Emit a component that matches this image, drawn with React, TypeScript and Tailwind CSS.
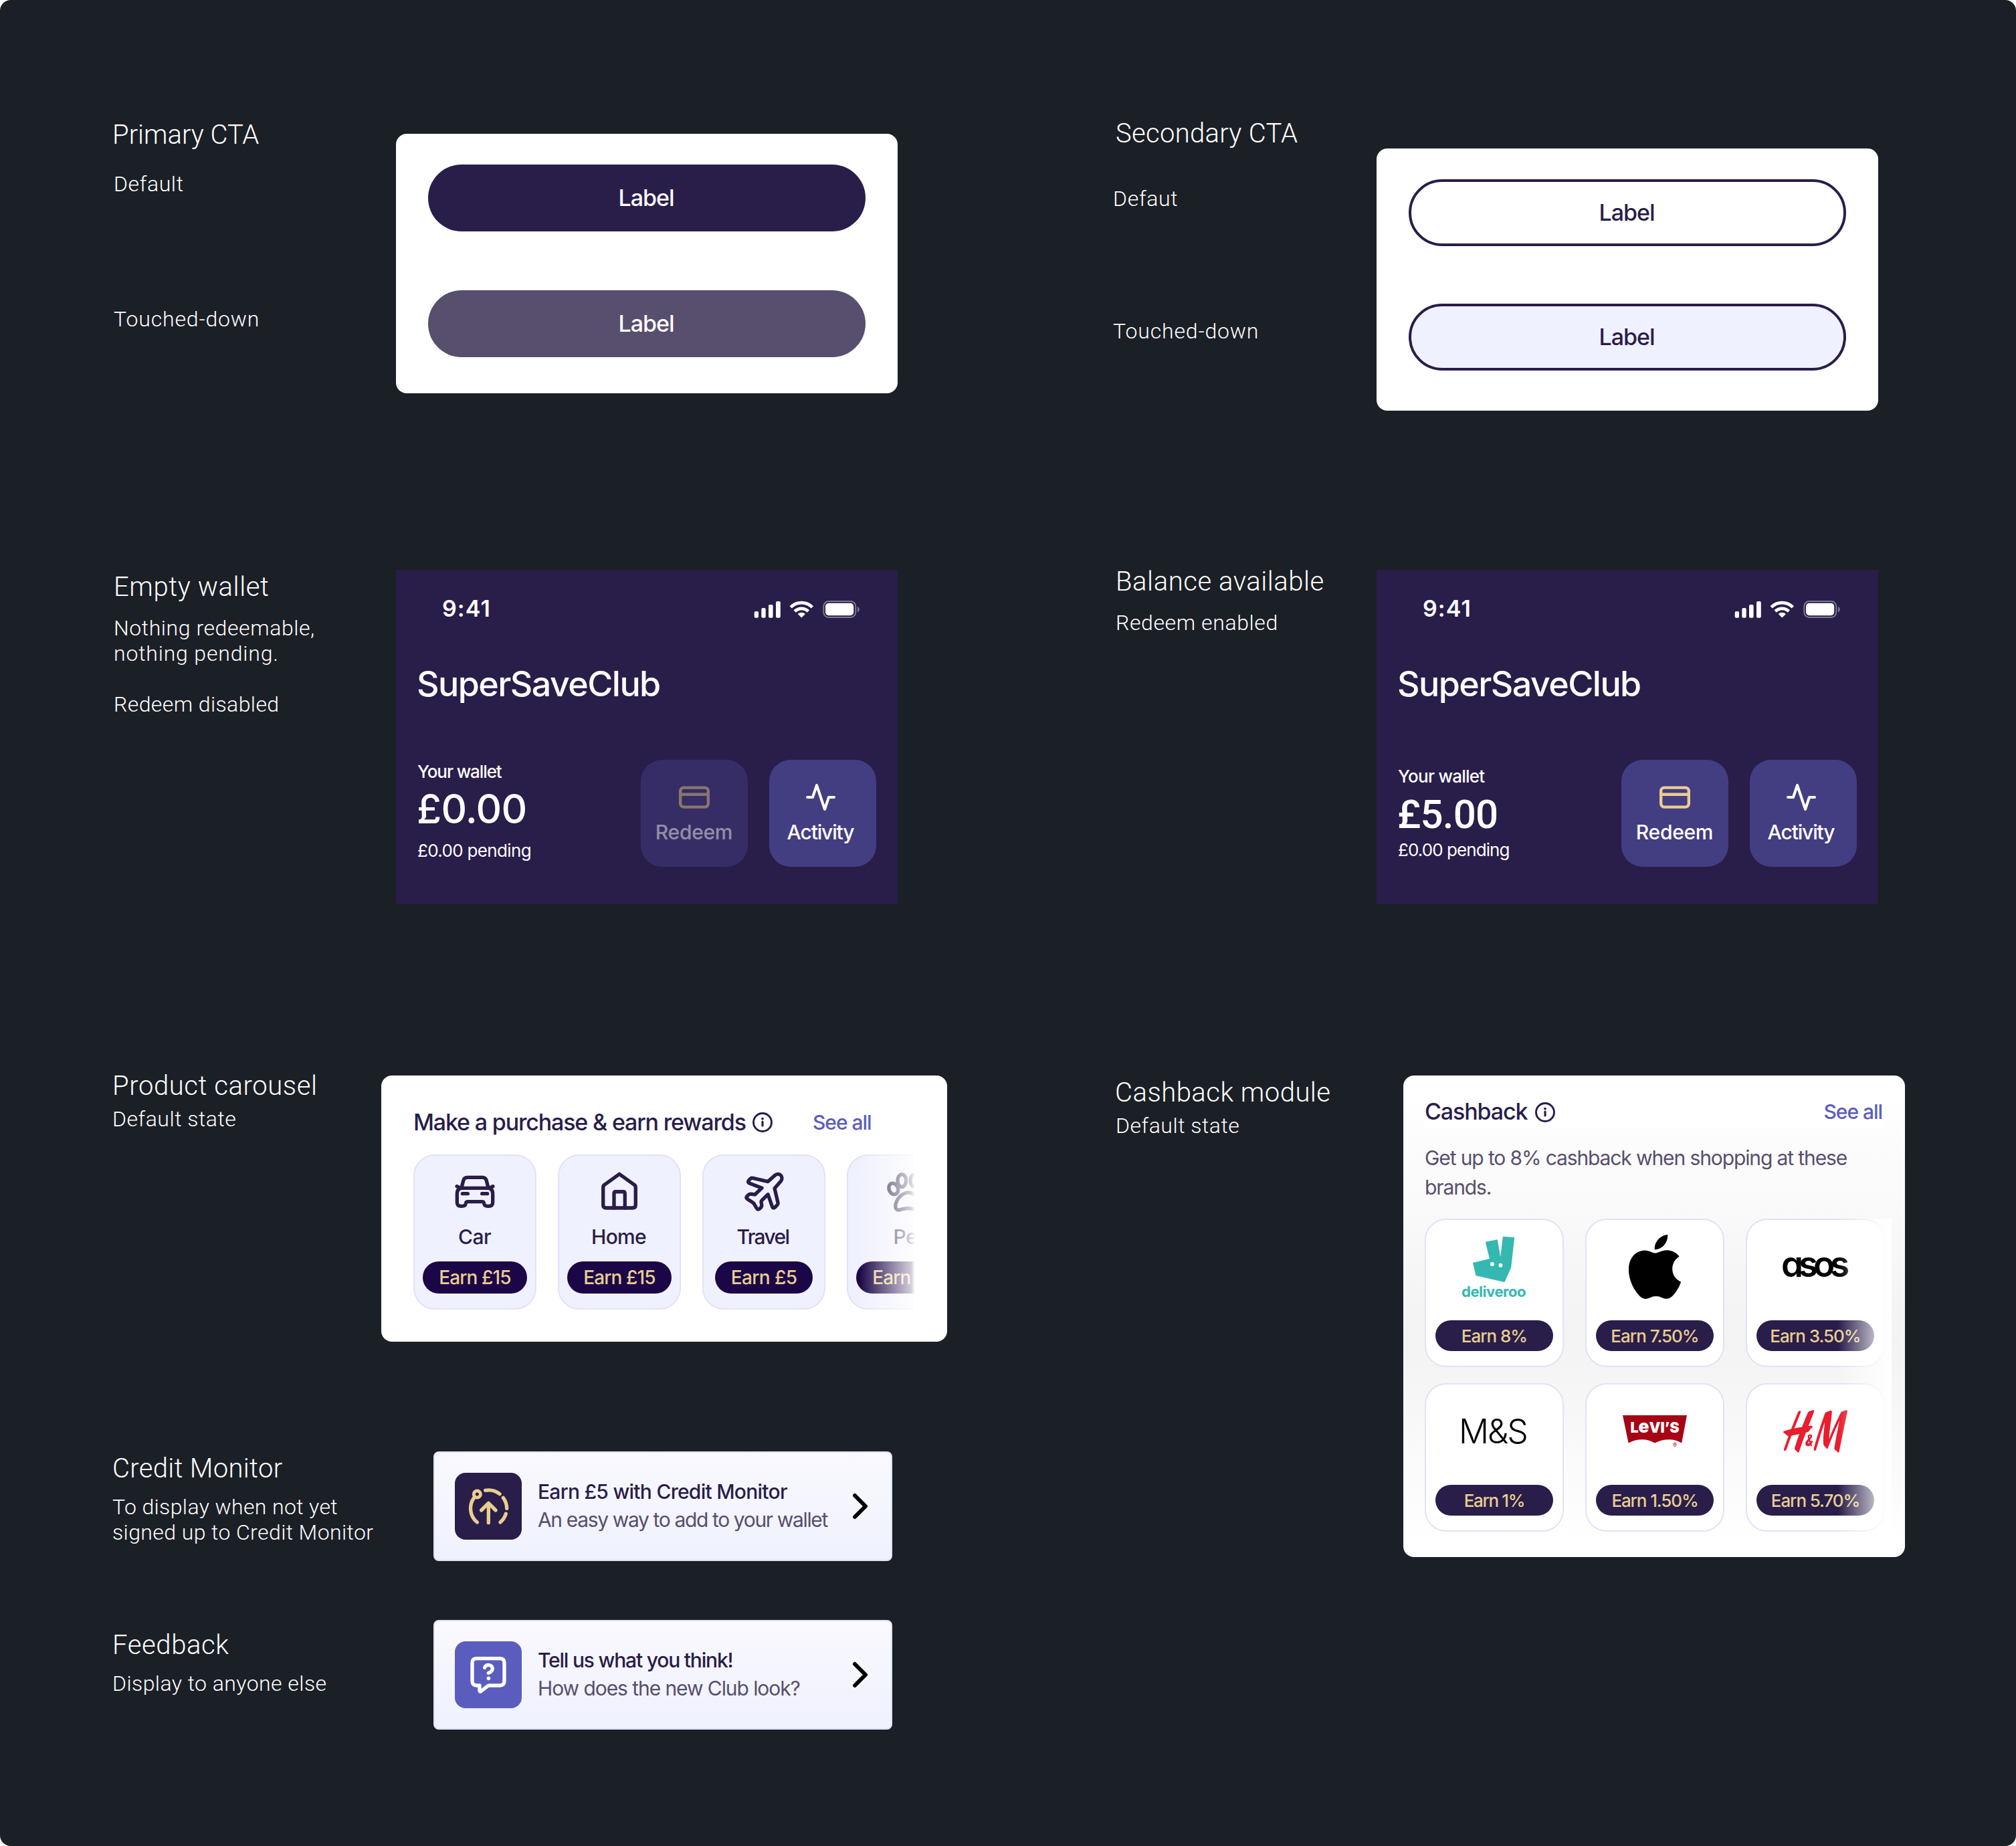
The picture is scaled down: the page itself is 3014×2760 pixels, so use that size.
import type { ReactNode } from "react";
import { SiApple, SiHandm } from "react-icons/si";

/* ---------- Annotation text ---------- */

function Heading({ children, className = "" }: { children: ReactNode; className?: string }) {
  return (
    <h2 className={`h-[48px] pt-[2px] text-[40px] leading-[48px] font-light whitespace-nowrap text-white ${className}`}>{children}</h2>
  );
}

function Note({ children, className = "" }: { children: ReactNode; className?: string }) {
  return (
    <p className={`text-[32px] leading-[38px] font-light whitespace-nowrap text-white ${className}`}>{children}</p>
  );
}

/* ---------- Buttons ---------- */

function Cta({ className }: { className: string }) {
  return (
    <button
      className={`flex h-[100px] w-[654px] items-center justify-center rounded-full pr-[2px] pb-[2px] text-[34px] font-medium tracking-[-1px] ${className}`}
    >
      Label
    </button>
  );
}

/* ---------- Wallet header ---------- */

function StatusIcons() {
  return (
    <svg width="158" height="26" viewBox="0 0 158 26" fill="#fff">
      <rect x="0.7" y="16" width="6.3" height="9.7" rx="2" />
      <rect x="11.3" y="11" width="6.4" height="14.7" rx="2" />
      <rect x="22" y="6" width="6.6" height="19.7" rx="2" />
      <rect x="33" y="1" width="6.8" height="24.7" rx="2" />
      <path d="M55.2 9.9a22.7 22.7 0 0 1 32.2 0M61.2 16a14.2 14.2 0 0 1 20.2 0" fill="none" stroke="#fff" strokeWidth="4.7" />
      <path d="M71.3 25.6 65.6 20a8.3 8.3 0 0 1 11.4 0Z" />
      <rect x="104.3" y="1" width="48" height="24" rx="7.5" fill="none" stroke="#fff" strokeOpacity="0.4" strokeWidth="2" />
      <rect x="107" y="3.8" width="42.2" height="18.4" rx="5" />
      <path d="M155 9v8.4c1.8-.7 2.8-2.3 2.8-4.2S156.8 9.700 155 9Z" fillOpacity="0.4" />
    </svg>
  );
}

function CardIcon() {
  return (
    <svg width="48" height="48" viewBox="0 0 48 48" fill="none" stroke="#e9ce91" strokeWidth="4.4" strokeLinecap="round">
      <rect x="3.2" y="9.6" width="41.6" height="29" rx="5" />
      <path d="M4 19.8H44" />
    </svg>
  );
}

function ActivityIcon() {
  return (
    <svg width="48" height="48" viewBox="0 0 24 24" fill="none" stroke="#fff" strokeWidth="2" strokeLinecap="round" strokeLinejoin="round">
      <path d="M22 12h-4l-3 9L9 3l-3 9H2" />
    </svg>
  );
}

function WalletAction({ icon, label, className = "" }: { icon: ReactNode; label: string; className?: string }) {
  return (
    <button className={`flex h-[160px] w-[160px] flex-col items-center rounded-[32px] bg-[#433d82] pt-8 text-white ${className}`}>
      {icon}
      <span className="mt-[10px] text-[30px] leading-[36px] font-medium">{label}</span>
    </button>
  );
}

function WalletCard({ children, redeemDisabled = false }: { children: ReactNode; redeemDisabled?: boolean }) {
  return (
    <div className="flex h-[500px] w-[750px] shrink-0 flex-col bg-[#291d4a] px-8 font-['Inter',sans-serif] text-white">
      <div className="mt-[38px] flex h-[40px] items-center justify-between pr-[25px] pl-[37px]">
        <span className="text-[34px] leading-[40px] font-semibold tracking-[1.1px]">9:41</span>
        <div className="pt-[2px]">
          <StatusIcons />
        </div>
      </div>
      <div className="mt-[61px] -ml-[1px] text-[52px] leading-[64px] font-medium tracking-[-1.57px]">SuperSaveClub</div>
      <div className="mt-[81px] flex h-[160px] justify-between">
        {children}
        <div className="flex gap-8">
          <WalletAction
            icon={<CardIcon />}
            label="Redeem"
            className={redeemDisabled ? "pr-[1px] tracking-[-0.3px] opacity-50" : "pr-[1px] tracking-[-0.3px]"}
          />
          <WalletAction icon={<ActivityIcon />} label="Activity" className="pr-[7px] tracking-[-1.15px]" />
        </div>
      </div>
    </div>
  );
}

/* ---------- Product carousel ---------- */

function InfoIcon() {
  return (
    <svg width="30" height="30" viewBox="0 0 30 30" fill="none" stroke="#291d4a" className="shrink-0">
      <circle cx="15" cy="15" r="13.5" strokeWidth="2.9" />
      <path d="M15 14v6" strokeWidth="3.2" strokeLinecap="round" />
      <circle cx="15" cy="9.6" r="1.9" fill="#291d4a" stroke="none" />
    </svg>
  );
}

function ProductIcon({ children }: { children: ReactNode }) {
  return (
    <svg width="64" height="64" viewBox="0 0 24 24" fill="none" stroke="#291d4a" strokeWidth="2" strokeLinecap="round" strokeLinejoin="round" className="shrink-0">
      {children}
    </svg>
  );
}

const products = [
  {
    name: "Car",
    reward: "Earn £15",
    nameClass: "pr-[1px] tracking-[-0.5px]",
    pillClass: "w-[156px] tracking-[-0.89px]",
    icon: (
      <>
        <path d="M4.5 9.7 5.5 5.8Q5.95 3.9 7.8 3.9H16.2Q18.05 3.9 18.5 5.8L19.5 9.7" />
        <path d="M5 9.9H19Q22 9.9 22 13V17.8Q22 20 19.8 20H19.2Q17.4 20 17.15 18.6 17 17.5 16 17.5H8Q7 17.5 6.85 18.6 6.6 20 4.8 20H4.2Q2 20 2 17.8V13Q2 9.9 5 9.9Z" />
        <path d="M5 13H8M16 13H19M1.9 8.9 3.3 9.6M22.1 8.9 20.7 9.6" />
      </>
    ),
  },
  {
    name: "Home",
    reward: "Earn £15",
    nameClass: "pr-[2px] tracking-[-0.7px]",
    pillClass: "w-[156px] tracking-[-0.89px]",
    icon: (
      <>
        <path d="M12 2 3.8 7.9Q2.9 8.5 2.9 9.5V19.3Q2.9 21 4.6 21H19.4Q21.1 21 21.1 19.3V9.5Q21.1 8.5 20.2 7.9Z" />
        <path d="M9 21V12.9Q9 11.9 10 11.9H14.1Q15.1 11.9 15.1 12.9V21" />
      </>
    ),
  },
  {
    name: "Travel",
    reward: "Earn £5",
    nameClass: "pr-[3px] tracking-[-1.6px]",
    pillClass: "w-[146px] tracking-[-0.61px]",
    icon: (
      <path d="M14.3 6.2 18.2 2.7C19.3 1.7 20.7 1.8 21.5 2.7 22.3 3.6 22.3 4.9 21.6 5.9L18 10 19.9 18.1Q20 18.7 19.6 19.2L18.3 20.6Q17.2 21.5 16.7 20.3L14.3 13.4 10.8 16.8Q10.5 17.1 10.5 17.6L10.8 19.5Q10.8 20.2 10.4 20.7L9.7 21.4Q8.7 22.3 7.9 21.1L6.5 18.7Q6.3 18.3 5.8 18L2.8 16Q1.7 15.3 2.6 14.4L3.4 13.6Q3.9 13.2 4.6 13.2L7 13.5 10.9 9.8 3.8 7.1Q2.7 6.6 3.6 5.5L4.6 4.5Q5.1 4.1 5.8 4.3Z" />
    ),
  },
  {
    name: "Pet",
    reward: "Earn £15",
    nameClass: "tracking-[-0.7px]",
    pillClass: "w-[156px] tracking-[-0.89px]",
    icon: (
      <>
        <ellipse cx="3.7" cy="10.3" rx="2.5" ry="3.2" transform="rotate(-22 3.7 10.3)" />
        <ellipse cx="8.4" cy="5.7" rx="2.4" ry="3.5" />
        <ellipse cx="15.6" cy="5.7" rx="2.4" ry="3.5" />
        <ellipse cx="20.3" cy="10.3" rx="2.5" ry="3.2" transform="rotate(22 20.3 10.3)" />
        <path d="M12 12.3C8.5 12.5 4.8 16.3 4.8 20.2 4.8 21.9 6 22.4 7.2 22.1 8.8 21.7 10.4 21.2 12 21.2S15.2 21.7 16.8 22.1C18 22.4 19.2 21.9 19.2 20.2 19.2 16.3 15.5 12.5 12 12.3Z" />
      </>
    ),
  },
];

function ProductCarousel() {
  return (
    <div className="mt-[10px] h-[398px] w-[846px] shrink-0 rounded-[16px] bg-white px-12 pt-[46px] font-['Inter',sans-serif] text-[#291d4a]">
      <div className="flex h-[48px] items-center">
        <span className="w-[507px] text-[34px] leading-[44px] font-medium tracking-[-1.17px] whitespace-nowrap">
          Make a purchase &amp; earn rewards
        </span>
        <InfoIcon />
        <span className="ml-[60px] text-[30px] leading-[44px] font-medium tracking-[-1.04px] text-[#5b5dbe]">See all</span>
      </div>
      <div className="relative mt-6 flex h-[232px] gap-8 overflow-hidden">
        {products.map((p) => (
          <div
            key={p.name}
            className="flex h-[232px] w-[184px] shrink-0 flex-col items-center rounded-[32px] border-2 border-[#e0e3f6] bg-[#f0f1fe] pt-[22px]"
          >
            <ProductIcon>{p.icon}</ProductIcon>
            <span className={`mt-[15px] text-[30px] leading-[40px] font-medium ${p.nameClass}`}>{p.name}</span>
            <span
              className={`mt-[17px] flex h-[48px] shrink-0 items-center justify-center rounded-full bg-[#1b0647] text-[28px] font-medium whitespace-nowrap text-[#e9ce91] ${p.pillClass}`}
            >
              {p.reward}
            </span>
          </div>
        ))}
        <div className="absolute inset-y-0 right-0 w-[84px] bg-[linear-gradient(to_right,rgba(255,255,255,0)_0%,rgba(255,255,255,0.8)_93%,#fff_100%)]" />
      </div>
    </div>
  );
}

/* ---------- Cashback ---------- */

function DeliverooLogo() {
  return (
    <svg width="96" height="96" viewBox="0 0 96 96" className="overflow-visible">
      <path
        fill="#35b8b2"
        d="M34.8 10.7 52.7 7.3 57.3 33.3 60.8 2.7 78.2 4 73.1 49.3 63.4 71 20.5 61.3 15.9 42 40.9 36Z"
      />
      <circle cx="45" cy="44" r="3" fill="#fff" />
      <circle cx="57.3" cy="45.7" r="3" fill="#fff" />
      <text x="-1" y="93.3" fill="#35b8b2" className="font-['Inter',sans-serif] text-[22px] font-bold tracking-[-0.46px]">
        deliveroo
      </text>
    </svg>
  );
}

function LevisLogo() {
  return (
    <svg width="96" height="96" viewBox="0 0 96 96">
      <path fill="#a60415" d="M0 24H96L88.2 65.5Q79 60.3 69.8 60.3 58 60.3 47.9 65.5 39 60.3 29 60.3 18 60.3 8.6 65.5Z" />
      <text x="11.5" y="50.3" fill="#fff" textLength="73" lengthAdjust="spacingAndGlyphs" className="font-['Inter',sans-serif] text-[22px] font-black">
        L<tspan fontSize="27">e</tspan>VI’S
      </text>
      <text x="78" y="71.5" textAnchor="middle" fill="#a60415" className="font-['Inter',sans-serif] text-[9px]">
        ®
      </text>
    </svg>
  );
}

const brands = [
  { id: "deliveroo", logo: <DeliverooLogo />, reward: "Earn 8%", pillClass: "tracking-[-1.04px]" },
  { id: "apple", logo: <SiApple size={96} color="#000" />, reward: "Earn 7.50%", pillClass: "tracking-[-0.99px]" },
  {
    id: "asos",
    logo: (
      <span className="pr-[7px] pb-[9px] text-[53px] leading-[60px] font-semibold tracking-[-7.2px] text-black [font-feature-settings:'cv11']">asos</span>
    ),
    reward: "Earn 3.50%",
    pillClass: "tracking-[-1.01px]",
  },
  {
    id: "ms",
    logo: <span className="pr-[4px] text-[50px] leading-[60px] font-light tracking-[-2px] text-black">M&amp;S</span>,
    reward: "Earn 1%",
    pillClass: "tracking-[-1.37px]",
  },
  { id: "levis", logo: <LevisLogo />, reward: "Earn 1.50%", pillClass: "tracking-[-1.13px]" },
  { id: "hm", logo: <SiHandm size={96} color="#e91d2d" />, reward: "Earn 5.70%", pillClass: "tracking-[-1.10px]" },
];

function CashbackModule() {
  return (
    <div className="h-[720px] w-[750px] shrink-0 rounded-[16px] bg-[linear-gradient(to_bottom,#fff_3%,#f3f3f3_55%,#fff_97%)] px-8 pt-8 font-['Inter',sans-serif] text-[#291d4a]">
      <div className="flex h-[46px] items-center bg-white">
        <span className="w-[165px] pb-[2px] text-[34px] leading-[44px] font-medium tracking-[-1.1px]">Cashback</span>
        <InfoIcon />
        <span className="mr-[2px] ml-auto pb-[2px] text-[30px] leading-[44px] font-medium tracking-[-1.04px] text-[#5b5dbe]">See all</span>
      </div>
      <p className="mt-[23px] text-[30px] leading-[44px] tracking-[-1.11px] text-[#584e6d]">
        Get up to 8% cashback when shopping at these
        <br />
        brands.
      </p>
      <div className="relative mt-[25px] grid w-[698px] grid-cols-[repeat(3,208px)] gap-x-8 gap-y-6">
        {brands.map((b) => (
          <div key={b.id} className="flex h-[222px] w-[208px] flex-col items-center rounded-[32px] border-2 border-[#e0e3f6] bg-white pt-[22px]">
            <div className="flex h-[96px] w-[120px] shrink-0 items-center justify-center whitespace-nowrap">{b.logo}</div>
            <span
              className={`mt-8 flex h-[46px] w-[176px] items-center justify-center rounded-full bg-[#291d4a] text-[26px] font-medium whitespace-nowrap text-[#e9ce91] ${b.pillClass}`}
            >
              {b.reward}
            </span>
          </div>
        ))}
        <div className="absolute inset-y-0 right-0 w-[80px] bg-linear-to-r from-white/0 to-white" />
      </div>
    </div>
  );
}

/* ---------- Promo rows ---------- */

function CreditMonitorIcon() {
  return (
    <svg width="100" height="100" viewBox="0 0 300 300" fill="none" stroke="#e9ce91" strokeWidth="16" strokeLinecap="round" strokeLinejoin="round">
      <circle cx="100" cy="96" r="15" strokeWidth="15" />
      <path d="M86 112A81 81 0 0 0 100 222" />
      <path d="M137 79A81 81 0 0 1 201 95" />
      <path d="M217 112A81 81 0 0 1 233 160" />
      <path d="M229 184A81 81 0 0 1 204 222" />
      <path d="M151 224V137M119 168 151 136 183 168" />
    </svg>
  );
}

function FeedbackIcon() {
  return (
    <svg width="100" height="100" viewBox="0 0 300 300" fill="none" stroke="#fff" strokeWidth="16" strokeLinecap="round" strokeLinejoin="round">
      <path d="M98 77H202Q222 77 222 97V178Q222 198 202 198H156Q150 198 145 202L116 225Q111 227 111 221V198H98Q78 198 78 178V97Q78 77 98 77Z" />
      <path d="M134 118C137 101 167 102 169 122 169 134 160 138 151 142" />
      <circle cx="151" cy="166" r="8.5" fill="#fff" stroke="none" />
    </svg>
  );
}

function PromoCard({ icon, tile, title, text }: { icon: ReactNode; tile: string; title: ReactNode; text: ReactNode }) {
  return (
    <div className="flex h-[164px] w-[686px] shrink-0 items-center rounded-[8px] border-2 border-[#dfe1f7] bg-linear-to-b from-[#f9f9fe] to-[#eff1fd] pr-[34px] pl-[30px] font-['Inter',sans-serif]">
      <div className={`h-[100px] w-[100px] shrink-0 rounded-[16px] ${tile}`}>{icon}</div>
      <div className="mb-[3px] ml-6 flex flex-col gap-[2px] text-[30px] leading-[40px] whitespace-nowrap">
        {title}
        {text}
      </div>
      <svg width="24" height="40" viewBox="0 0 24 40" fill="none" stroke="#000" strokeWidth="6" strokeLinecap="round" strokeLinejoin="round" className="ml-auto">
        <path d="M4 4 20 20 4 36" />
      </svg>
    </div>
  );
}

/* ---------- Page ---------- */

export default function App() {
  return (
    <div className="bg-white">
      <main className="flex h-[2760px] w-[3014px] overflow-hidden rounded-[16px] bg-[#1b1f26] font-['Roboto',sans-serif]">
        <div className="w-[1500px] pt-[176px] pl-[168px]">
          <section className="flex h-[676px]">
            <div className="w-[424px]">
              <Heading>Primary CTA</Heading>
              <Note className="mt-8 ml-[2px] tracking-[0.6px]">Default</Note>
              <Note className="mt-[164px] ml-[2px] tracking-[0.85px]">Touched-down</Note>
            </div>
            <div className="mt-6 flex h-[388px] w-[750px] flex-col items-center gap-[88px] rounded-[16px] bg-white pt-[46px] font-['Inter',sans-serif]">
              <Cta className="bg-[#291d4a] text-white" />
              <Cta className="bg-[#584e6d] text-white" />
            </div>
          </section>

          <section className="flex h-[746px]">
            <div className="w-[424px] pl-[2px]">
              <Heading className="tracking-[0.61px]">Empty wallet</Heading>
              <Note className="mt-5 tracking-[0.57px]">Nothing redeemable,</Note>
              <Note className="tracking-[0.82px]">nothing pending.</Note>
              <Note className="mt-[38px] tracking-[0.4px]">Redeem disabled</Note>
            </div>
            <WalletCard redeemDisabled>
              <div className="pt-[2px]">
                <div className="text-[26px] leading-[32px] font-medium tracking-[-1.1px] whitespace-nowrap">Your wallet</div>
                <div className="mt-[7px] -ml-[1px] text-[60px] leading-[64px] font-medium tracking-[-0.8px]">£0.00</div>
                <div className="mt-[15px] text-[26px] leading-[32px] tracking-[-0.66px] whitespace-nowrap">£0.00 pending</div>
              </div>
            </WalletCard>
          </section>

          <section className="flex h-[572px]">
            <div className="w-[402px]">
              <Heading className="tracking-[0.59px]">Product carousel</Heading>
              <Note className="mt-2 tracking-[0.52px]">Default state</Note>
            </div>
            <ProductCarousel />
          </section>

          <section className="flex h-[252px]">
            <div className="w-[480px]">
              <Heading className="tracking-[0.32px]">Credit Monitor</Heading>
              <Note className="mt-4 tracking-[0.37px]">To display when not yet</Note>
              <Note className="tracking-[0.4px]">signed up to Credit Monitor</Note>
            </div>
            <PromoCard
              icon={<CreditMonitorIcon />}
              tile="bg-[#291d4a]"
              title={<span className="font-medium tracking-[-0.74px] text-[#291d4a]">Earn £5 with Credit Monitor</span>}
              text={<span className="tracking-[-1.36px] text-[#584e6d]">An easy way to add to your wallet</span>}
            />
          </section>

          <section className="flex">
            <div className="w-[480px] pt-3">
              <Heading className="tracking-[0.63px]">Feedback</Heading>
              <Note className="mt-4 tracking-[0.43px]">Display to anyone else</Note>
            </div>
            <PromoCard
              icon={<FeedbackIcon />}
              tile="bg-[#5b5dbe]"
              title={<span className="font-medium tracking-[-1.2px] text-[#291d4a]">Tell us what you think!</span>}
              text={<span className="tracking-[-1.07px] text-[#584e6d]">How does the new Club look?</span>}
            />
          </section>
        </div>

        <div className="w-[1514px] pt-[174px] pl-[165px]">
          <section className="flex h-[670px]">
            <div className="w-[393px]">
              <Heading className="ml-[3px] tracking-[0.3px]">Secondary CTA</Heading>
              <Note className="mt-14 -ml-[1px] tracking-[0.7px]">Defaut</Note>
              <Note className="mt-40 -ml-[1px] tracking-[0.85px]">Touched-down</Note>
            </div>
            <div className="mt-12 flex h-[392px] w-[750px] flex-col items-center gap-[86px] rounded-[16px] bg-white pt-[46px] font-['Inter',sans-serif]">
              <Cta className="border-4 border-[#291d4a] bg-white text-[#291d4a]" />
              <Cta className="border-4 border-[#291d4a] bg-[#f0f1fe] text-[#291d4a]" />
            </div>
          </section>

          <section className="flex h-[764px]">
            <div className="w-[393px] pl-[3px]">
              <Heading className="tracking-[0.56px]">Balance available</Heading>
              <Note className="mt-5 tracking-[0.6px]">Redeem enabled</Note>
            </div>
            <div className="mt-2">
              <WalletCard>
                <div className="pt-[9px]">
                  <div className="text-[26px] leading-[32px] font-medium tracking-[-0.75px] whitespace-nowrap">Your wallet</div>
                  <div className="mt-[9px] -ml-[1px] font-['Roboto',sans-serif] text-[60px] leading-[64px] font-medium tracking-[-0.8px]">£5.00</div>
                  <div className="mt-[5px] text-[26px] leading-[32px] tracking-[-0.92px] whitespace-nowrap">£0.00 pending</div>
                </div>
              </WalletCard>
            </div>
          </section>

          <section className="flex">
            <div className="w-[433px] pl-[2px]">
              <Heading className="tracking-[0.5px]">Cashback module</Heading>
              <Note className="mt-2 ml-[1px] tracking-[0.52px]">Default state</Note>
            </div>
            <CashbackModule />
          </section>
        </div>
      </main>
    </div>
  );
}
